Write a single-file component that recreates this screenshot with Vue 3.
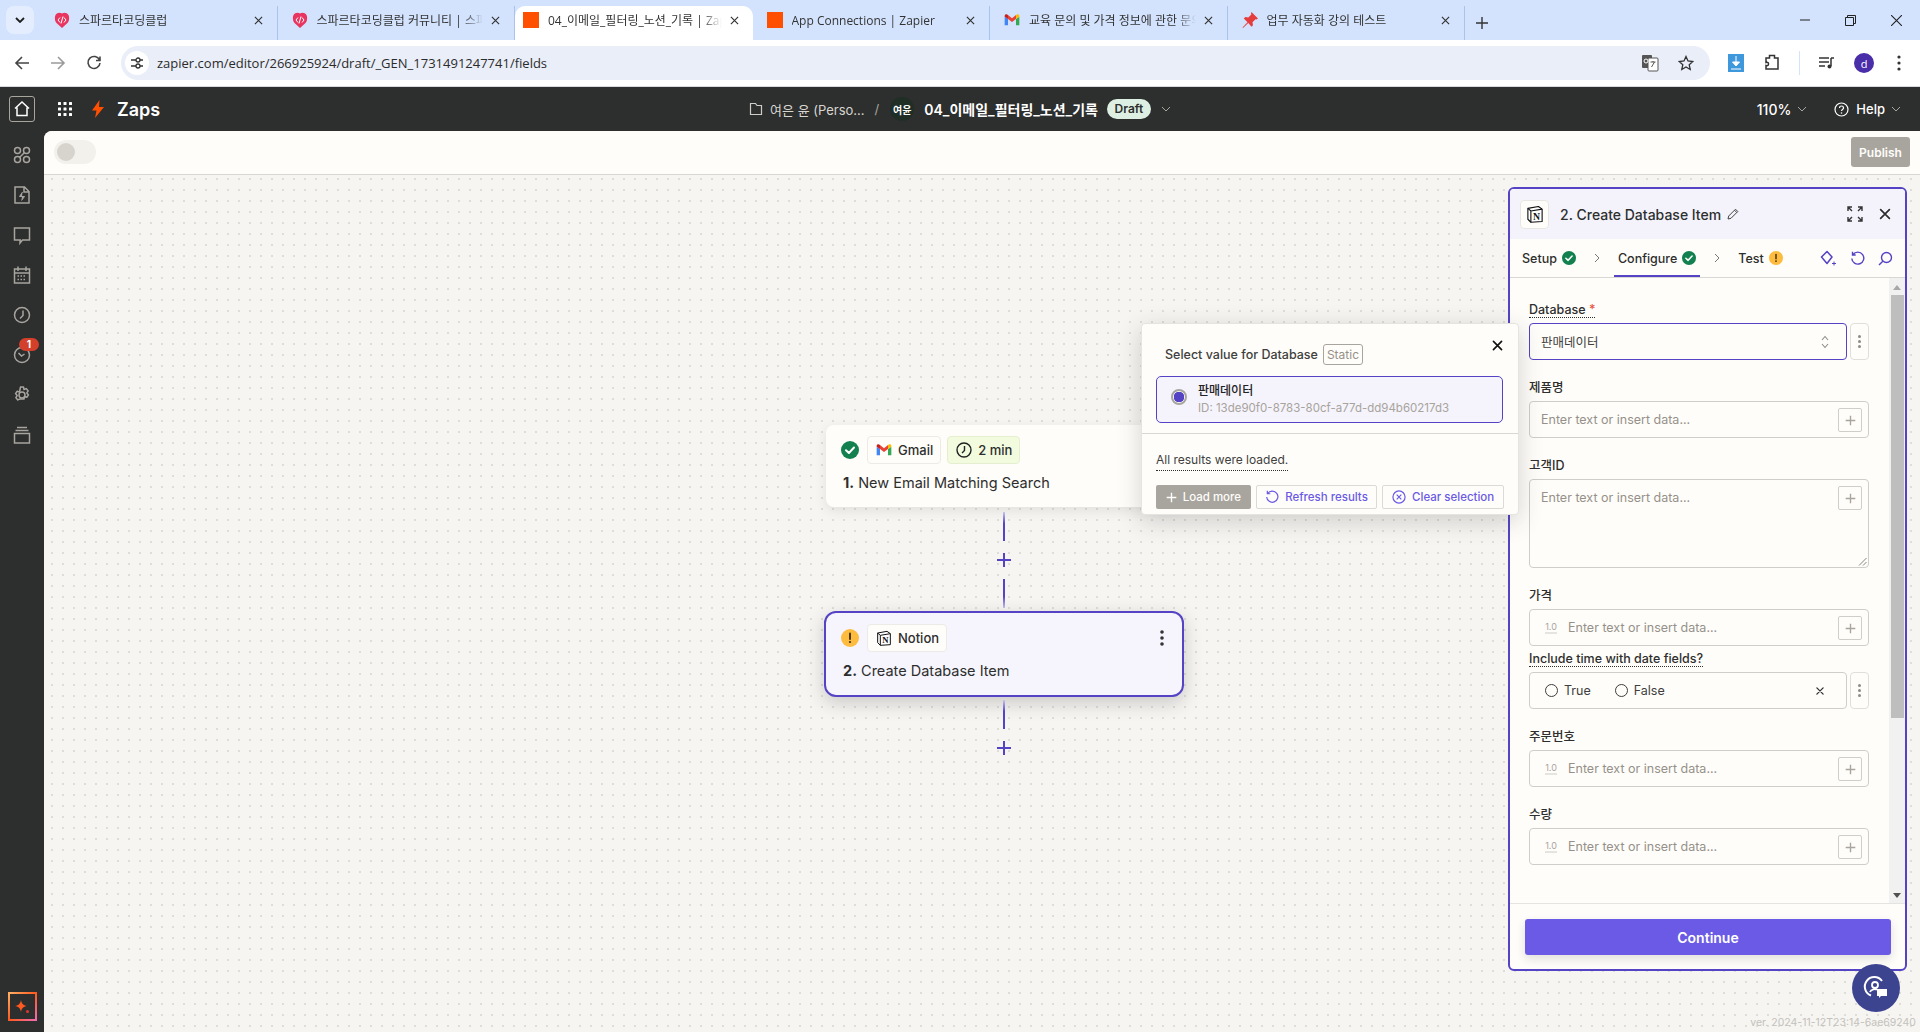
<template>
  <div class="app">
    <!-- shared icons -->
    <svg class="defs" aria-hidden="true">
      <symbol id="i-gmail" viewBox="0 0 24 24">
        <path fill="#4285F4" d="M1 20h5V10.5L1 7z" />
        <path fill="#34A853" d="M18 20h5V7l-5 3.5z" />
        <path fill="#EA4335" d="M6 10.5V4.6l6 4.6 6-4.6v5.9l-6 4.6z" />
        <path fill="#FBBC04" d="M18 4.6v5.9L23 7V5.6c0-1.9-2.2-3-3.6-1.9z" />
        <path fill="#C5221F" d="M1 7l5 3.5V4.6l-1.4-.9C3.2 2.6 1 3.7 1 5.6z" />
      </symbol>
      <symbol id="i-notion" viewBox="0 0 24 24">
        <path fill="#fff" stroke="#111" stroke-width="1.5" stroke-linejoin="round" d="M2.5 4.5 16.5 2l5 3.5V22L6.5 23l-4-4z" />
        <path fill="none" stroke="#111" stroke-width="1.5" d="M2.5 4.5 6.5 8l15-2.500M6.500 8v15" />
        <text x="14" y="19.500" text-anchor="middle" font-family="Liberation Serif, serif" font-weight="700" font-size="13" fill="#111">N</text>
      </symbol>
      <symbol id="i-check" viewBox="0 0 18 18">
        <circle cx="9" cy="9" r="9" fill="#13804f" />
        <path d="M5 9.300 7.900 12 13 6.500" fill="none" stroke="#fff" stroke-width="2" stroke-linecap="round" stroke-linejoin="round" />
      </symbol>
      <symbol id="i-warn" viewBox="0 0 18 18">
        <circle cx="9" cy="9" r="9" fill="#fdbc3f" />
        <path d="M9 4.500v5.500" stroke="#3a2b07" stroke-width="1.800" stroke-linecap="round" />
        <circle cx="9" cy="13" r="1.100" fill="#3a2b07" />
      </symbol>
      <symbol id="i-plus" viewBox="0 0 16 16">
        <path d="M8 1v14M1 8h14" fill="none" stroke="currentColor" stroke-width="2" />
      </symbol>
      <symbol id="i-close" viewBox="0 0 16 16">
        <path d="M3 3l10 10M13 3 3 13" fill="none" stroke="currentColor" stroke-width="2" stroke-linecap="round" />
      </symbol>
      <symbol id="i-chev" viewBox="0 0 10 6">
        <path d="M1 1l4 4 4-4" fill="none" stroke="currentColor" stroke-width="1" />
      </symbol>
      <symbol id="i-spark" viewBox="0 0 16 16">
        <path d="M8 1.500c.6 3.800 2.300 5.800 6 6.500-3.700.7-5.400 2.700-6 6.500-.6-3.800-2.300-5.800-6-6.500 3.700-.7 5.400-2.700 6-6.500z" fill="currentColor" />
      </symbol>
    </svg>

    <!-- Abas do navegador -->
    <div class="tabstrip">
      <button class="tab-search">
        <svg width="10" height="6" viewBox="0 0 10 6"><path d="M1 1l4 4 4-4" fill="none" stroke="#1f1f1f" stroke-width="1.800" /></svg>
      </button>
      <div
        v-for="tab in tabs"
        :key="tab.title"
        :class="['tab', { active: tab.active }]"
      >
        <svg v-if="tab.icon === 'sparta'" class="favicon" viewBox="0 0 16 16">
          <path d="M8 16 2.500 11C.5 9 .5 5 1.500 3 3 .5 6 0 8 1.500 10 0 13 .5 14.500 3c1 2 1 6-1 8z" fill="#e8345f" />
          <path d="M6 5.500 4 8l2 2.500M10 5.500 12 8l-2 2.500M9 4.500l-2 7" fill="none" stroke="#fff" stroke-width="1" />
        </svg>
        <span v-else-if="tab.icon === 'zapier'" class="favicon zap-square"></span>
        <svg v-else-if="tab.icon === 'gmail'" class="favicon"><use href="#i-gmail" /></svg>
        <svg v-else class="favicon" viewBox="0 0 16 16">
          <path d="M9.500 0 16 6.500l-1.500 1-1-.3-3 3 .5 3-1.500 1.500L6.300 11 1 16l-.5-.5 5-5.300L1.800 6.500 3.300 5l3 .5 3-3-.3-1z" fill="#e53d3d" />
        </svg>
        <span class="tab-title">{{ tab.title }}</span>
        <svg class="tab-x" width="9" height="9" viewBox="0 0 10 10"><path d="M1 1l8 8M9 1 1 9" stroke="#333" stroke-width="1.300" /></svg>
      </div>
      <svg class="new-tab" width="12" height="12" viewBox="0 0 12 12"><path d="M6 0v12M0 6h12" stroke="#333" stroke-width="1.400" /></svg>
      <div class="win-controls">
        <svg width="10" height="10" viewBox="0 0 10 10"><path d="M0 5h10" stroke="#222" /></svg>
        <svg width="11" height="11" viewBox="0 0 11 11"><path d="M.5 2.500h8v8h-8zM2.500 2.500v-2h8v8h-2" fill="none" stroke="#222" /></svg>
        <svg width="11" height="11" viewBox="0 0 10 10"><path d="M0 0l10 10M10 0 0 10" stroke="#222" /></svg>
      </div>
    </div>

    <!-- Barra de endereço -->
    <div class="toolbar">
      <svg class="nav-ic first" width="16" height="16" viewBox="0 0 16 16"><path d="M15 8H2M8 2 2 8l6 6" fill="none" stroke="#444" stroke-width="1.600" /></svg>
      <svg class="nav-ic" width="16" height="16" viewBox="0 0 16 16"><path d="M1 8h13M8 2l6 6-6 6" fill="none" stroke="#9a9a9a" stroke-width="1.600" /></svg>
      <svg class="nav-ic" width="16" height="16" viewBox="0 0 16 16"><path d="M13.500 5A6 6 0 1 0 14 8M14 1.500V5.500h-4" fill="none" stroke="#444" stroke-width="1.600" /></svg>
      <div class="urlbar">
        <span class="tune">
          <svg width="14" height="14" viewBox="0 0 14 14"><path d="M1 4h5M10 10h3M1 10h5M10 4h3" stroke="#333" stroke-width="1.300" /><circle cx="8" cy="4" r="2" fill="none" stroke="#333" stroke-width="1.300" /><circle cx="8" cy="10" r="2" fill="none" stroke="#333" stroke-width="1.300" /></svg>
        </span>
        <span class="url">zapier.com/editor/266925924/draft/_GEN_1731491247741/fields</span>
        <svg class="translate" width="18" height="18" viewBox="0 0 18 18">
          <rect x="1" y="1" width="10" height="13" rx="1" fill="#555" />
          <rect x="7" y="4" width="10" height="13" rx="1" fill="#fff" stroke="#555" />
          <path d="M9.500 8h5M12 7v1M10.500 13l3-5" stroke="#555" fill="none" />
          <circle cx="5" cy="7" r="2" fill="none" stroke="#fff" />
        </svg>
        <svg class="star" width="16" height="16" viewBox="0 0 16 16"><path d="m8 1.500 2 4.500 4.800.5-3.600 3.200 1 4.800L8 12l-4.200 2.500 1-4.800L1.200 6.500 6 6z" fill="none" stroke="#333" stroke-width="1.300" /></svg>
      </div>
      <svg class="ext-dl" width="16" height="18" viewBox="0 0 16 18"><rect width="16" height="18" fill="#3f97dc" /><path d="M8 2v9M4.500 8 8 12l3.500-4z" fill="#fff" stroke="#fff" /><path d="M3 15h10" stroke="#fff" /></svg>
      <svg class="ext-puzzle" width="16" height="18" viewBox="0 0 16 18"><path d="M2 4h3.500V1.500h5V4H14v11H2v-3.500c2 .5 2.500-.5 2.500-1.500S4 8 2 8.500z" fill="none" stroke="#333" stroke-width="1.500" /></svg>
      <span class="tool-sep"></span>
      <svg class="ext-media" width="16" height="14" viewBox="0 0 16 14"><path d="M0 2h10M0 6h10M0 10h6" stroke="#333" stroke-width="1.500" /><path d="M12 2h3M12 2v8" stroke="#333" stroke-width="1.500" /><circle cx="10.500" cy="10.500" r="2" fill="#333" /></svg>
      <span class="avatar">d</span>
      <svg class="kebab" width="4" height="16" viewBox="0 0 4 16"><circle cx="2" cy="2" r="1.600" fill="#333" /><circle cx="2" cy="8" r="1.600" fill="#333" /><circle cx="2" cy="14" r="1.600" fill="#333" /></svg>
    </div>

    <!-- Cabeçalho do editor -->
    <header class="zap-header">
      <div class="head-left">
        <span class="home-btn">
          <svg width="18" height="18" viewBox="0 0 18 18"><path d="M2 8.500 9 2l7 6.500M4 7.500V15.500h10V7.500" fill="none" stroke="#fff" stroke-width="1.500" /></svg>
        </span>
        <svg class="apps" width="14" height="14" viewBox="0 0 14 14">
          <g fill="#fff">
            <rect v-for="c in gridDots" :key="c.k" :x="c.x" :y="c.y" width="3" height="3" rx=".5" />
          </g>
        </svg>
        <svg class="bolt" width="12" height="18" viewBox="0 0 12 18"><path d="M7.500 0 0 10.500h4.500L3 18l9-11H7z" fill="#ff4f00" /></svg>
        <span class="zaps">Zaps</span>
      </div>
      <div class="head-center">
        <svg width="14" height="14" viewBox="0 0 14 14"><path d="M1.500 1.500h5l1.500 2h4.500v9h-11z" fill="none" stroke="#cfcdc8" stroke-width="1.200" /></svg>
        <span class="folder-name">여은 윤 (Perso...</span>
        <span class="crumb-sep">/</span>
        <span class="owner">여윤</span>
        <span class="zap-name">04_이메일_필터링_노션_기록</span>
        <span class="draft">Draft</span>
        <svg class="chev head-chev"><use href="#i-chev" /></svg>
      </div>
      <div class="head-right">
        <span class="zoom-val">110%</span>
        <svg class="chev"><use href="#i-chev" /></svg>
        <svg class="help-ic" width="15" height="15" viewBox="0 0 15 15"><circle cx="7.500" cy="7.500" r="6.500" fill="none" stroke="#fff" stroke-width="1.200" /><path d="M5.500 6c0-2.700 4-2.700 4 0 0 1.500-2 1.500-2 3" fill="none" stroke="#fff" stroke-width="1.200" /><circle cx="7.500" cy="11" r=".8" fill="#fff" /></svg>
        <span class="help">Help</span>
        <svg class="chev"><use href="#i-chev" /></svg>
      </div>
    </header>

    <div class="workspace">
      <!-- Barra lateral -->
      <aside class="sidebar">
        <div v-for="item in sideItems" :key="item.name" class="side-item">
          <svg width="20" height="20" viewBox="0 0 20 20" fill="none" stroke="#a8a59f" stroke-width="1.500" v-html="item.svg"></svg>
          <span v-if="item.badge" class="side-badge">{{ item.badge }}</span>
        </div>
        <div class="ai-btn">
          <svg width="16" height="16" viewBox="0 0 16 16">
            <path d="M7 1c.6 3.600 2 5.300 6 6-4 .7-5.400 2.400-6 6-.6-3.600-2-5.300-6-6 4-.7 5.400-2.400 6-6z" fill="#ff5a1f" />
            <circle cx="13.500" cy="12.500" r="1.500" fill="#e5352b" />
          </svg>
        </div>
      </aside>

      <main class="main">
        <div class="editor-bar">
          <span class="toggle"><span class="knob"></span></span>
          <button class="publish">Publish</button>
        </div>

        <div class="canvas">
          <!-- Nó 1 -->
          <div class="node node-one">
            <div class="node-top">
              <svg class="status"><use href="#i-check" /></svg>
              <span class="chip"><svg class="chip-ic"><use href="#i-gmail" /></svg>Gmail</span>
              <span class="chip chip-time">
                <svg class="chip-ic" viewBox="0 0 16 16"><circle cx="8" cy="8" r="7" fill="none" stroke="#222" stroke-width="1.400" /><path d="M8.500 4v4.500L6 11" fill="none" stroke="#222" stroke-width="1.400" /></svg>
                2 min
              </span>
            </div>
            <div class="node-title"><b>1.</b> New Email Matching Search</div>
          </div>

          <span class="line line-a"></span>
          <svg class="add add-a"><use href="#i-plus" /></svg>
          <span class="line line-b"></span>

          <!-- Nó 2 -->
          <div class="node node-two">
            <div class="node-top">
              <svg class="status"><use href="#i-warn" /></svg>
              <span class="chip"><svg class="chip-ic"><use href="#i-notion" /></svg>Notion</span>
              <svg class="node-menu" width="4" height="16" viewBox="0 0 4 16"><circle cx="2" cy="2" r="1.800" fill="#333" /><circle cx="2" cy="8" r="1.800" fill="#333" /><circle cx="2" cy="14" r="1.800" fill="#333" /></svg>
            </div>
            <div class="node-title"><b>2.</b> Create Database Item</div>
          </div>

          <span class="line line-c"></span>
          <svg class="add add-b"><use href="#i-plus" /></svg>

          <!-- Painel lateral -->
          <section class="panel">
            <div class="panel-head">
              <span class="panel-logo"><svg width="18" height="18"><use href="#i-notion" /></svg></span>
              <span class="panel-title">2. Create Database Item</span>
              <svg class="pencil" width="12" height="12" viewBox="0 0 12 12"><path d="M1 11l.7-3L8.500 1.200l2.300 2.300L4 10.300zM7.500 2.200l2.300 2.300" fill="none" stroke="#444" /></svg>
              <svg class="expand" width="16" height="16" viewBox="0 0 16 16"><path d="M1 5V1h4M11 1h4v4M15 11v4h-4M5 15H1v-4M1 1l4 4M15 1l-4 4M15 15l-4-4M1 15l4-4" fill="none" stroke="#333" stroke-width="1.400" /></svg>
              <svg class="panel-close"><use href="#i-close" /></svg>
            </div>

            <div class="panel-tabs">
              <span class="ptab">Setup<svg class="pstat"><use href="#i-check" /></svg></span>
              <svg class="ptab-sep" width="6" height="10" viewBox="0 0 6 10"><path d="M1 1l4 4-4 4" fill="none" stroke="#777" /></svg>
              <span class="ptab current">Configure<svg class="pstat"><use href="#i-check" /></svg></span>
              <svg class="ptab-sep" width="6" height="10" viewBox="0 0 6 10"><path d="M1 1l4 4-4 4" fill="none" stroke="#777" /></svg>
              <span class="ptab">Test<svg class="pstat"><use href="#i-warn" /></svg></span>
              <span class="ptab-tools">
                <svg width="17" height="17" viewBox="0 0 17 17"><path d="M7 1.500 12 7 7 13.500 1.500 7z" fill="none" stroke="#5443c4" stroke-width="1.500" stroke-linejoin="round" /><path d="M14 11.500v4M12 13.500h4" stroke="#5443c4" /></svg>
                <svg width="15" height="15" viewBox="0 0 15 15"><path d="M3 3.500a6 6 0 1 1-1.200 4M2.500 .8v3.200h3.200" fill="none" stroke="#5443c4" stroke-width="1.400" /></svg>
                <svg width="15" height="15" viewBox="0 0 15 15"><circle cx="8.500" cy="6.500" r="5" fill="none" stroke="#5443c4" stroke-width="1.400" /><path d="M4.800 10.200 1 14" stroke="#5443c4" stroke-width="1.400" /></svg>
              </span>
            </div>

            <div class="panel-body">
              <div class="form">
                <div class="field">
                  <label class="flabel dotted">Database <i class="req">*</i></label>
                  <div class="with-menu">
                    <div class="input select">
                      <span class="select-val">판매데이터</span>
                      <svg width="8" height="14" viewBox="0 0 8 14"><path d="M1 5l3-3.500L7 5M1 9l3 3.500L7 9" fill="none" stroke="#8f8b85" stroke-width="1.100" /></svg>
                    </div>
                    <span class="more"><i></i><i></i><i></i></span>
                  </div>
                </div>

                <div
                  v-for="f in fields"
                  :key="f.label"
                  :class="['field', { gapped: f.kind === 'radio' }]"
                >
                  <label :class="['flabel', { dotted: f.kind === 'radio' }]">{{ f.label }}</label>
                  <div v-if="f.kind === 'radio'" class="with-menu">
                    <div class="input radio-row">
                      <span class="radio"></span><span class="radio-text">True</span>
                      <span class="radio second"></span><span class="radio-text">False</span>
                      <svg class="radio-x" width="10" height="10"><use href="#i-close" /></svg>
                    </div>
                    <span class="more"><i></i><i></i><i></i></span>
                  </div>
                  <div v-else :class="['input', { area: f.kind === 'area' }]">
                    <span v-if="f.kind === 'number'" class="num-tag">1.0</span>
                    <span class="placeholder">Enter text or insert data...</span>
                    <span class="plus-btn"><svg width="11" height="11"><use href="#i-plus" /></svg></span>
                    <svg v-if="f.kind === 'area'" class="grip" width="9" height="9" viewBox="0 0 9 9"><path d="M1 8.500 8.500 1M5 8.500 8.500 5" stroke="#666" stroke-width=".8" /></svg>
                  </div>
                </div>
              </div>

              <div class="scrollbar">
                <svg class="sb-arrow" width="8" height="5" viewBox="0 0 8 5"><path d="M4 0l4 5H0z" fill="#a8a8a8" /></svg>
                <span class="sb-thumb"></span>
                <svg class="sb-arrow down" width="8" height="5" viewBox="0 0 8 5"><path d="M0 0h8L4 5z" fill="#505050" /></svg>
              </div>
            </div>

            <div class="panel-foot">
              <button class="continue">Continue</button>
            </div>
          </section>

          <!-- Popover de seleção -->
          <div class="popover">
            <div class="pop-head">
              <span class="pop-title">Select value for Database</span>
              <span class="static">Static</span>
              <svg class="pop-close"><use href="#i-close" /></svg>
            </div>
            <div class="option">
              <span class="opt-radio"></span>
              <div>
                <div class="opt-name">판매데이터</div>
                <div class="opt-id">ID: 13de90f0-8783-80cf-a77d-dd94b60217d3</div>
              </div>
            </div>
            <div class="pop-divider"></div>
            <div class="pop-lower">
              <span class="loaded">All results were loaded.</span>
              <div class="pop-actions">
                <button class="btn-load"><svg width="11" height="11"><use href="#i-plus" /></svg>Load more</button>
                <button class="btn-ghost">
                  <svg width="14" height="14" viewBox="0 0 15 15"><path d="M3 3.500a6 6 0 1 1-1.200 4M2.500 .8v3.200h3.200" fill="none" stroke="currentColor" stroke-width="1.300" /></svg>
                  Refresh results
                </button>
                <button class="btn-ghost">
                  <svg width="14" height="14" viewBox="0 0 15 15"><circle cx="7.500" cy="7.500" r="6.500" fill="none" stroke="currentColor" stroke-width="1.300" /><path d="M5 5l5 5M10 5l-5 5" stroke="currentColor" stroke-width="1.300" /></svg>
                  Clear selection
                </button>
              </div>
            </div>
          </div>

          <!-- Botão flutuante -->
          <span class="fab">
            <svg width="28" height="28" viewBox="0 0 28 28">
              <path d="M20 7A9.500 9.500 0 1 0 9 21.500" fill="none" stroke="#fff" stroke-width="2" />
              <circle cx="13" cy="11" r="3" fill="none" stroke="#fff" stroke-width="1.800" />
              <path d="M8 18c1-3 6-3.500 7-2" fill="none" stroke="#fff" stroke-width="1.800" />
              <path d="M15 15h10v7h-6l-2 2v-2h-2z" fill="#fff" />
            </svg>
          </span>
          <span class="version">ver. 2024-11-12T23:14-6ae69240</span>
        </div>
      </main>
    </div>
  </div>
</template>

<script setup>
const tabs = [
  { title: '스파르타코딩클럽', icon: 'sparta' },
  { title: '스파르타코딩클럽 커뮤니티 | 스파르타', icon: 'sparta' },
  { title: '04_이메일_필터링_노션_기록 | Zapier', icon: 'zapier', active: true },
  { title: 'App Connections | Zapier', icon: 'zapier' },
  { title: '교육 문의 및 가격 정보에 관한 문의', icon: 'gmail' },
  { title: '업무 자동화 강의 테스트', icon: 'pin' },
];

const gridDots = [0, 5.5, 11].flatMap((y) =>
  [0, 5.5, 11].map((x) => ({ k: `${x}-${y}`, x, y })),
);

const sideItems = [
  { name: 'templates', svg: '<circle cx="5.500" cy="5.500" r="3"/><circle cx="14.500" cy="5.500" r="3"/><circle cx="5.500" cy="14.500" r="3"/><circle cx="14.500" cy="14.500" r="3"/><path d="M7.500 12.500l5-5"/>' },
  { name: 'zaps', svg: '<path d="M3 2h9.500l4.500 4.500V18H3zM12 2v5h5"/><path d="M10.500 7 7.500 11.500h5L9.500 15.500" fill="#a8a59f" stroke-width="1"/>' },
  { name: 'chat', svg: '<path d="M2.500 3h15v12h-7L8 18l.2-3H2.500z"/>' },
  { name: 'calendar', svg: '<path d="M2.500 4h15v14h-15zM6 1.500V6M14 1.500V6M2.500 8h15"/><path d="M5.500 11h9M5.500 14.500h9" stroke-dasharray="1.500 1.500"/>' },
  { name: 'history', svg: '<circle cx="10" cy="10" r="7.500"/><path d="M11 5.500v5L8 13.500"/>' },
  { name: 'runs', badge: '1', svg: '<circle cx="10" cy="10" r="7.500"/><path d="M6.500 8l3 3 3-2"/>' },
  { name: 'settings', svg: '<circle cx="10" cy="10" r="3"/><path d="M8.500 2h3l.5 2.500 2.200-.9 2 2.300-1.400 2 1.700 2-1.700 2.300-2.300-.7-.5 2.500h-3L8 14l-2.200.9-2-2.300 1.400-2-1.700-2 1.700-2.300 2.300.7z" stroke-linejoin="round"/>' },
  { name: 'assets', svg: '<path d="M5 2.500h10M3.500 5.500h13M2.500 8.500h15v9.500h-15z"/>' },
];

const fields = [
  { label: '제품명', kind: 'text' },
  { label: '고객ID', kind: 'area' },
  { label: '가격', kind: 'number' },
  { label: 'Include time with date fields?', kind: 'radio' },
  { label: '주문번호', kind: 'number' },
  { label: '수량', kind: 'number' },
];
</script>

<style>
html,
body {
  margin: 0;
  background: #2d2e2e;
}
</style>

<style scoped>
.app {
  display: flex;
  flex-direction: column;
  height: 100vh;
  overflow: hidden;
  font-family: Inter, "Noto Sans CJK KR", sans-serif;
}

button {
  font-family: inherit;
  border: none;
  padding: 0;
}

.defs {
  position: absolute;
  width: 0;
  height: 0;
}

/* Abas */
.tabstrip {
  display: flex;
  align-items: flex-end;
  height: 40px;
  padding-left: 40px;
  background: #d3e3fd;
  position: relative;
  font-family: "Open Sans", "Noto Sans CJK KR", sans-serif;
}

.tab-search {
  position: absolute;
  left: 6px;
  top: 6px;
  width: 28px;
  height: 28px;
  border-radius: 8px;
  background: #e3edfd;
  display: flex;
  align-items: center;
  justify-content: center;
}

.tab {
  width: 237.500px;
  height: 34px;
  box-sizing: border-box;
  display: flex;
  align-items: center;
  padding: 0 14px 6px 7px;
  position: relative;
  border-right: 1px solid #a9c4ec;
  margin-bottom: 0;
}

.tab:nth-child(n) .favicon {
  margin-left: 7px;
}

.tab.active {
  background: #fff;
  border-radius: 10px 10px 0 0;
  border-right: none;
  padding-left: 1px;
}

.favicon {
  width: 16px;
  height: 16px;
  flex: none;
}

.zap-square {
  background: #ff4f00;
}

.tab-title {
  flex: 1;
  min-width: 0;
  margin: 0 8px 0 9px;
  font-size: 12px;
  color: #333;
  white-space: nowrap;
  overflow: hidden;
  -webkit-mask-image: linear-gradient(to right, #000 88%, transparent);
  mask-image: linear-gradient(to right, #000 88%, transparent);
}

.tab-x {
  flex: none;
}

.new-tab {
  margin: 0 0 11px 11px;
}

.win-controls {
  margin-left: auto;
  height: 40px;
  display: flex;
  align-items: center;
  gap: 35px;
  padding-right: 18px;
}

/* Barra de endereço */
.toolbar {
  height: 47px;
  box-sizing: border-box;
  background: #fff;
  border-bottom: 1px solid #d8dadf;
  display: flex;
  align-items: center;
}

.nav-ic {
  margin-left: 20px;
}

.nav-ic.first {
  margin-left: 14px;
}

.urlbar {
  width: 1589px;
  height: 34px;
  margin-left: 19px;
  border-radius: 17px;
  background: #e9eef8;
  display: flex;
  align-items: center;
  box-sizing: border-box;
  padding: 0 16px 0 4px;
}

.tune {
  width: 24px;
  height: 24px;
  border-radius: 50%;
  background: #fff;
  display: flex;
  align-items: center;
  justify-content: center;
}

.url {
  margin-left: 8px;
  flex: 1;
  font-family: "Open Sans", sans-serif;
  font-size: 13px;
  color: #2b2b2b;
}

.star {
  margin-left: 19px;
}

.ext-dl {
  margin-left: 18px;
}

.ext-puzzle {
  margin-left: 20px;
}

.tool-sep {
  width: 1px;
  height: 24px;
  margin-left: 19px;
  background: #d3e3fd;
}

.ext-media {
  margin-left: 19px;
}

.avatar {
  width: 20px;
  height: 20px;
  margin-left: 19px;
  border-radius: 50%;
  background: #4a2da8;
  color: #fff;
  font: 11px "Open Sans", sans-serif;
  display: flex;
  align-items: center;
  justify-content: center;
}

.kebab {
  margin-left: 23px;
}

/* Cabeçalho */
.zap-header {
  height: 44px;
  flex: none;
  background: #2d2e2e;
  color: #fff;
  display: grid;
  grid-template-columns: 1fr auto 1fr;
  align-items: center;
}

.head-left,
.head-center,
.head-right {
  display: flex;
  align-items: center;
}

.head-left {
  padding-left: 9px;
}

.home-btn {
  width: 26px;
  height: 26px;
  box-sizing: border-box;
  border: 1px solid #a8a59f;
  border-radius: 3px;
  display: flex;
  align-items: center;
  justify-content: center;
}

.apps {
  margin-left: 23px;
}

.bolt {
  margin-left: 20px;
}

.zaps {
  margin-left: 13px;
  font-size: 18px;
  font-weight: 600;
}

.folder-name {
  margin-left: 7px;
  font-size: 13px;
  color: #d8d6d1;
}

.crumb-sep {
  margin: 0 11px 0 10px;
  font-size: 13px;
  color: #a8a59f;
}

.owner {
  width: 24px;
  height: 24px;
  border-radius: 50%;
  background: #1f2f26;
  font-size: 10px;
  font-weight: 700;
  display: flex;
  align-items: center;
  justify-content: center;
}

.zap-name {
  margin-left: 10px;
  font-size: 14px;
  font-weight: 600;
}

.draft {
  margin-left: 9px;
  width: 44px;
  height: 20px;
  border-radius: 10px;
  background: #dcefe2;
  color: #2d2e2e;
  font-size: 12px;
  font-weight: 600;
  text-align: center;
  line-height: 20px;
}

.chev {
  width: 10px;
  height: 6px;
  color: #a8a59f;
}

.head-chev {
  margin-left: 10px;
}

.head-right {
  justify-content: flex-end;
  padding-right: 19px;
}

.zoom-val {
  font-size: 14px;
  font-weight: 500;
}

.head-right .chev {
  margin-left: 6px;
}

.help-ic {
  margin-left: 27px;
}

.help {
  margin-left: 7px;
  font-size: 13px;
  font-weight: 500;
}

/* Área de trabalho */
.workspace {
  flex: 1;
  min-height: 0;
  display: flex;
}

.sidebar {
  width: 44px;
  flex: none;
  background: #2d2e2e;
  padding: 4px 0 11px;
  box-sizing: border-box;
  display: flex;
  flex-direction: column;
  align-items: center;
}

.side-item {
  height: 40px;
  width: 44px;
  position: relative;
  display: flex;
  align-items: center;
  justify-content: center;
}

.side-badge {
  position: absolute;
  left: 19px;
  top: 3px;
  width: 20px;
  height: 13px;
  border-radius: 7px;
  background: #d2402b;
  color: #fff;
  font-size: 10px;
  font-weight: 700;
  line-height: 13px;
  text-align: center;
}

.ai-btn {
  margin-top: auto;
  width: 29px;
  height: 29px;
  box-sizing: border-box;
  border: 2px solid;
  border-image: linear-gradient(135deg, #ffb066, #ff5a1f 50%, #f26bb0) 1;
  border-radius: 4px;
  display: flex;
  align-items: center;
  justify-content: center;
}

.main {
  flex: 1;
  min-width: 0;
  display: flex;
  flex-direction: column;
  background: #fffdf9;
  border-top-left-radius: 8px;
  overflow: hidden;
}

.editor-bar {
  height: 44px;
  flex: none;
  box-sizing: border-box;
  border-bottom: 1px solid #d9d7d1;
  background: #fffdf9;
  display: flex;
  align-items: center;
  justify-content: space-between;
  padding: 0 10px 1px 10px;
}

.toggle {
  width: 42px;
  height: 24px;
  border-radius: 12px;
  background: #f3f1ec;
  display: flex;
  align-items: center;
  padding-left: 3px;
  box-sizing: border-box;
}

.knob {
  width: 18px;
  height: 18px;
  border-radius: 50%;
  background: #d6d4cd;
}

.publish {
  width: 59px;
  height: 30px;
  border-radius: 3px;
  background: #a8a59f;
  color: #fffdf9;
  font-size: 12px;
  font-weight: 600;
}

.canvas {
  flex: 1;
  position: relative;
  background-color: #f6f5f2;
  background-image: radial-gradient(circle at 1px 1px, #dfddd7 0.8px, transparent 1.2px);
  background-size: 11px 11px;
  background-position: 7px 3px;
}

/* Nós */
.node {
  position: absolute;
  box-sizing: border-box;
  border-radius: 8px;
  background: #fffdf9;
  box-shadow: 0 4px 12px rgba(45, 46, 46, 0.1);
  color: #2d2e2e;
}

.node-one {
  left: 782px;
  top: 250px;
  width: 356px;
  height: 82px;
  padding: 11px 15px;
}

.node-two {
  left: 780px;
  top: 436px;
  width: 360px;
  height: 86px;
  padding: 11px 15px 0;
  border: 2.500px solid #5443c4;
  border-radius: 12px;
  background: #f6f5fd;
  box-shadow: 0 6px 18px rgba(45, 46, 46, 0.22);
}

.node-top {
  display: flex;
  align-items: center;
  height: 28px;
}

.status {
  width: 18px;
  height: 18px;
  flex: none;
  margin-right: 8px;
}

.chip {
  height: 28px;
  box-sizing: border-box;
  display: flex;
  align-items: center;
  gap: 6px;
  padding: 0 7px 0 8px;
  margin-right: 6px;
  border: 1px solid #ecebe6;
  border-radius: 4px;
  background: #fffdf9;
  font-size: 13px;
  font-weight: 500;
}

.chip-time {
  background: #f3fbdf;
  border-color: #e5efd0;
}

.chip-ic {
  width: 16px;
  height: 16px;
}

.node-menu {
  margin-left: auto;
  margin-right: 3px;
}

.node-title {
  margin-top: 10px;
  font-size: 14.500px;
  font-weight: 400;
  padding-left: 2px;
}

.node-title b {
  font-weight: 700;
}

.line {
  position: absolute;
  left: 959px;
  width: 2px;
  height: 29px;
  background: #5443c4;
}

.line-a {
  top: 337px;
  background: linear-gradient(#c9c4ee, #5443c4 40%);
}

.line-b {
  top: 404px;
  background: linear-gradient(#5443c4 60%, #c9c4ee);
}

.line-c {
  top: 525px;
  background: linear-gradient(#c9c4ee, #5443c4 40%);
}

.add {
  position: absolute;
  left: 952px;
  width: 16px;
  height: 16px;
  color: #5443c4;
}

.add-a {
  top: 377px;
}

.add-b {
  top: 565px;
}

/* Painel */
.panel {
  position: absolute;
  left: 1464px;
  top: 12px;
  width: 399px;
  height: 784px;
  box-sizing: border-box;
  display: flex;
  flex-direction: column;
  border: 2px solid #5443c4;
  border-radius: 6px;
  background: #fffdf9;
  color: #2d2e2e;
  overflow: hidden;
}

.panel-head {
  height: 50px;
  flex: none;
  display: flex;
  align-items: center;
  padding: 0 13px 0 10px;
  background: #f4f3fb;
}

.panel-logo {
  width: 29px;
  height: 29px;
  box-sizing: border-box;
  border: 1px solid #e8e6e0;
  border-radius: 4px;
  background: #fffdf9;
  display: flex;
  align-items: center;
  justify-content: center;
}

.panel-title {
  margin-left: 11px;
  font-size: 14px;
  font-weight: 500;
}

.pencil {
  margin-left: 6px;
}

.expand {
  margin-left: auto;
}

.panel-close {
  width: 14px;
  height: 14px;
  margin-left: 15px;
  color: #2d2e2e;
}

.panel-tabs {
  height: 39px;
  flex: none;
  box-sizing: border-box;
  border-bottom: 1px solid #d9d7d1;
  display: flex;
  align-items: center;
  padding-left: 12px;
  font-size: 12.500px;
  font-weight: 500;
}

.ptab {
  height: 38px;
  box-sizing: border-box;
  display: flex;
  align-items: center;
  gap: 5px;
}

.ptab.current {
  padding: 0 4px;
  border-bottom: 2px solid #5443c4;
  margin: 0 -4px;
  padding-top: 2px;
}

.pstat {
  width: 14px;
  height: 14px;
}

.ptab-sep {
  margin: 0 18px;
}

.ptab-tools {
  margin-left: auto;
  display: flex;
  align-items: center;
  gap: 13px;
  padding-right: 12px;
}

.panel-body {
  height: 625px;
  flex: none;
  display: flex;
  overflow: hidden;
}

.form {
  flex: 1;
  min-width: 0;
  box-sizing: border-box;
  padding: 24px 20px 0 19px;
}

.field {
  margin-bottom: 21px;
}

.field.gapped .flabel {
  margin-top: 26px;
}

.flabel {
  display: block;
  width: fit-content;
  height: 18px;
  margin-bottom: 2px;
  font-size: 12.500px;
  font-weight: 500;
  line-height: 14px;
}

.field.gapped {
  margin-top: -21px;
}

.flabel.dotted {
  height: 15px;
  margin-bottom: 5px;
  padding-top: 1px;
  box-sizing: content-box;
  height: 14px;
  border-bottom: 1px dotted #2d2e2e;
}

.req {
  color: #e5523a;
  font-style: normal;
}

.with-menu {
  display: flex;
  gap: 3px;
}

.with-menu .input {
  flex: 1;
}

.input {
  position: relative;
  height: 37px;
  box-sizing: border-box;
  border: 1px solid #d0cec8;
  border-radius: 4px;
  background: #fffdf9;
  display: flex;
  align-items: center;
  padding: 0 11px;
  font-size: 12.500px;
}

.input.area {
  height: 89px;
  align-items: flex-start;
  padding-top: 10px;
}

.select {
  border-color: #5443c4;
  justify-content: space-between;
  padding-right: 17px;
}

.select-val {
  color: #403f3e;
  font-size: 12.500px;
}

.more {
  width: 19px;
  height: 37px;
  box-sizing: border-box;
  border: 1px solid #e1dfd9;
  border-radius: 4px;
  display: flex;
  flex-direction: column;
  align-items: center;
  justify-content: center;
  gap: 2px;
}

.more i {
  width: 3px;
  height: 3px;
  border-radius: 50%;
  background: #8f8b85;
}

.placeholder {
  color: #95918a;
  line-height: 15px;
}

.num-tag {
  width: 12px;
  margin: 0 11px 0 4px;
  font-size: 9px;
  color: #a8a59f;
  border-bottom: 2px solid #e6e4df;
  line-height: 11px;
  text-align: center;
}

.plus-btn {
  position: absolute;
  right: 6px;
  top: 6px;
  width: 24px;
  height: 24px;
  box-sizing: border-box;
  border: 1px solid #d0cec8;
  border-radius: 2px;
  color: #a8a59f;
  display: flex;
  align-items: center;
  justify-content: center;
}

.grip {
  position: absolute;
  right: 1px;
  bottom: 1px;
}

.radio-row {
  padding-left: 15px;
}

.radio {
  width: 13px;
  height: 13px;
  box-sizing: border-box;
  border: 1.500px solid #3e3e3d;
  border-radius: 50%;
}

.radio.second {
  margin-left: 24px;
}

.radio-text {
  margin-left: 6px;
  color: #403f3e;
}

.radio-x {
  margin-left: auto;
  margin-right: 10px;
  color: #2d2e2e;
}

.scrollbar {
  width: 16px;
  flex: none;
  background: #f1f1f1;
  display: flex;
  flex-direction: column;
  align-items: center;
  padding: 7px 0 5px;
  box-sizing: border-box;
}

.sb-thumb {
  width: 13px;
  height: 423px;
  margin-top: 5px;
  background: #bebebe;
}

.sb-arrow.down {
  margin-top: auto;
}

.panel-foot {
  flex: 1;
  border-top: 1px solid #e6e4df;
  padding: 15px 14px 0 15px;
}

.continue {
  width: 100%;
  height: 36px;
  border-radius: 3px;
  background: #6a5ae6;
  color: #fff;
  font-size: 14px;
  font-weight: 600;
  box-shadow: 0 4px 10px rgba(45, 46, 46, 0.14);
}

/* Popover */
.popover {
  position: absolute;
  left: 1097px;
  top: 148px;
  width: 378px;
  height: 192px;
  box-sizing: border-box;
  border: 1px solid #e6e4df;
  border-radius: 4px;
  background: #fffdf9;
  box-shadow: 0 6px 24px rgba(45, 46, 46, 0.2);
  color: #403f3e;
}

.pop-head {
  height: 52px;
  box-sizing: border-box;
  position: relative;
  display: flex;
  align-items: center;
  padding: 8px 0 0 23px;
}

.pop-title {
  font-size: 12.500px;
  font-weight: 500;
}

.static {
  margin-left: 5px;
  height: 21px;
  width: 40px;
  box-sizing: border-box;
  border: 1px solid #a8a59f;
  border-radius: 3px;
  color: #95918a;
  font-size: 12px;
  line-height: 19px;
  text-align: center;
}

.pop-close {
  position: absolute;
  right: 14px;
  top: 15px;
  width: 13px;
  height: 13px;
  color: #111;
}

.option {
  width: 347px;
  height: 47px;
  margin-left: 14px;
  box-sizing: border-box;
  border: 1px solid #5443c4;
  border-radius: 5px;
  background: #f5f4fd;
  display: flex;
  align-items: center;
  padding-left: 14px;
  gap: 11px;
}

.opt-radio {
  width: 16px;
  height: 16px;
  margin-top: -6px;
  box-sizing: border-box;
  border: 2px solid #a8a59f;
  border-radius: 50%;
  background: radial-gradient(circle, #5443c4 0 5px, transparent 5.500px);
}

.opt-name {
  font-size: 12px;
  font-weight: 500;
  color: #222;
  line-height: 17px;
}

.opt-id {
  font-size: 11.500px;
  color: #a8a39b;
  line-height: 18px;
}

.pop-divider {
  margin-top: 10px;
  height: 1px;
  background: #d9d7d1;
}

.pop-lower {
  padding: 14px 14px 0;
}

.loaded {
  display: inline-block;
  font-size: 12px;
  line-height: 17px;
  border-bottom: 1px dotted #2d2e2e;
  padding-bottom: 2px;
}

.pop-actions {
  margin-top: 14px;
  display: flex;
  gap: 5px;
}

.pop-actions button {
  height: 24px;
  box-sizing: border-box;
  display: flex;
  align-items: center;
  justify-content: center;
  gap: 6px;
  border-radius: 2px;
  font-size: 11.500px;
  font-weight: 500;
  white-space: nowrap;
}

.btn-load {
  width: 95px;
  background: #a8a59f;
  color: #fffdf9;
  font-weight: 600;
}

.btn-ghost {
  background: #fffdf9;
  border: 1px solid #dcdad4;
  color: #6a5ae6;
  padding: 0 6px;
  width: 122px;
}

/* Extras */
.fab {
  position: absolute;
  left: 1808px;
  top: 789px;
  width: 48px;
  height: 48px;
  border-radius: 50%;
  background: #3c4490;
  display: flex;
  align-items: center;
  justify-content: center;
}

.version {
  position: absolute;
  right: 4px;
  bottom: 3px;
  font-size: 10.500px;
  color: #c4c1bb;
}
</style>
